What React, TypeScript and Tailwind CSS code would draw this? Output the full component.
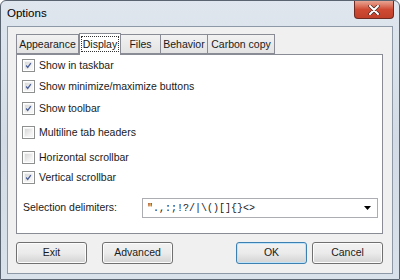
import React, { useState } from 'react';

const font = { fontFamily: '"Liberation Sans", Arial, sans-serif' };

function CheckBox({ checked, label }: { checked: boolean; label: string }) {
  return (
    <div className="flex items-center h-[13px]">
      <div className="w-[13px] h-[13px] border border-[#8e8f8f] bg-white p-[1px]">
        <div className="w-full h-full bg-gradient-to-br from-[#d8d8d8] to-[#fbfbfb] border border-[#f4f4f4] flex items-center justify-center">
          {checked && (
            <svg width="9" height="9" viewBox="0 0 9 9">
              <path d="M1.5 4.5 L3.5 7 L7.5 1.5" fill="none" stroke="#4a5f97" strokeWidth="1.6" />
            </svg>
          )}
        </div>
      </div>
      <span className="ml-[4px] text-[10.5px] text-[#1a1a1a] leading-none">{label}</span>
    </div>
  );
}

function Btn({ label, primary }: { label: string; primary?: boolean }) {
  return (
    <button
      className={
        'block w-[71px] h-[22px] rounded-[3px] border text-[10.5px] text-[#1a1a1a] bg-gradient-to-b from-[#f2f2f2] via-[#ebebeb] to-[#d3d3d3] ' +
        (primary ? 'border-[#3c7fb1] shadow-[inset_0_0_0_1px_#bfe3f8]' : 'border-[#707070] shadow-[inset_0_0_0_1px_#fcfcfc]')
      }
    >
      {label}
    </button>
  );
}

export default function App() {
  const [tab] = useState('Display');
  const tabs = [
    { name: 'Appearance', w: 'w-[63px]' },
    { name: 'Display', w: 'w-[42px]' },
    { name: 'Files', w: 'w-[41px]' },
    { name: 'Behavior', w: 'w-[48px]' },
    { name: 'Carbon copy', w: 'w-[68px]' },
  ];
  const checks = [
    { label: 'Show in taskbar', on: true, mt: 'mt-[4px]' },
    { label: 'Show minimize/maximize buttons', on: true, mt: 'mt-[8px]' },
    { label: 'Show toolbar', on: true, mt: 'mt-[9px]' },
    { label: 'Multiline tab headers', on: false, mt: 'mt-[11px]' },
    { label: 'Horizontal scrollbar', on: false, mt: 'mt-[12px]' },
    { label: 'Vertical scrollbar', on: true, mt: 'mt-[7px]' },
  ];

  return (
    <div style={font} className="w-[400px] h-[280px] bg-white">
      <div className="w-[400px] h-[280px] flex flex-col border border-[#5a6470] rounded-t-[6px] bg-gradient-to-b from-[#dfe6ee] via-[#d3dce6] to-[#d9e1ea]">
        <div className="h-[25px] flex justify-between items-start">
          <span className="ml-[6px] mt-[4px] text-[11.5px] text-black">Options</span>
          <div className="mr-[5px] w-[40px] h-[18px] rounded-b-[4px] border border-[#6d2a22] border-t-0 bg-gradient-to-b from-[#e8a493] via-[#cf4a33] to-[#c0402a] flex items-center justify-center">
            <svg width="12" height="10" viewBox="0 0 12 10">
              <path d="M2 1 L10 9 M10 1 L2 9" stroke="#4a2a25" strokeWidth="3.4" strokeLinecap="round" />
              <path d="M2 1 L10 9 M10 1 L2 9" stroke="#ffffff" strokeWidth="2" strokeLinecap="round" />
            </svg>
          </div>
        </div>
        <div className="mx-[6px] h-[248px] bg-[#f0f0f0] border border-[#8e99a7] flex flex-col">
          <div className="ml-[8px] mt-[5px] flex items-end h-[22px]">
            {tabs.map((t) => {
              const sel = t.name === tab;
              return (
                <div
                  key={t.name}
                  className={
                    'text-[10.5px] text-[#1a1a1a] flex items-center justify-center border border-[#898c95] ' +
                    (sel
                      ? 'h-[22px] -mb-[1px] bg-white border-b-0 z-10 ' + t.w
                      : 'h-[20px] bg-gradient-to-b from-[#f2f2f2] to-[#e3e3e3] -ml-[1px] first:ml-0 ' + t.w)
                  }
                >
                  <span className={sel ? 'border border-dotted border-[#333] px-[1px] leading-[14px] -mt-[2px]' : 'mt-[1px]'}>{t.name}</span>
                </div>
              );
            })}
          </div>
          <div className="ml-[8px] w-[367px] h-[180px] bg-white border border-[#898c95] flex flex-col pl-[5px]">
            {checks.map((c) => (
              <div key={c.label} className={c.mt}>
                <CheckBox checked={c.on} label={c.label} />
              </div>
            ))}
            <div className="mt-[14px] flex items-center">
              <span className="ml-[1px] w-[119px] text-[10.5px] text-[#1a1a1a]">Selection delimiters:</span>
              <div className="w-[236px] h-[20px] border border-[#abadb3] bg-white flex items-center justify-between pl-[4px] pr-[6px]">
                <span className="text-[10px] text-[#1a1a1a]" style={{ fontFamily: '"Liberation Mono", monospace' }}>
                  ".,:;!?/|\()[]{'{}'}&lt;&gt;
                </span>
                <svg width="7" height="4" viewBox="0 0 7 4">
                  <path d="M0 0 H7 L3.5 4 Z" fill="#000" />
                </svg>
              </div>
            </div>
          </div>
          <div className="ml-[8px] mt-[8px] flex items-start w-[367px]">
            <Btn label="Exit" />
            <div className="ml-[15px] flex">
              <Btn label="Advanced" />
            </div>
            <div className="ml-auto flex gap-[5px]">
              <Btn label="OK" primary />
              <Btn label="Cancel" />
            </div>
          </div>
        </div>
      </div>
    </div>
  );
}
